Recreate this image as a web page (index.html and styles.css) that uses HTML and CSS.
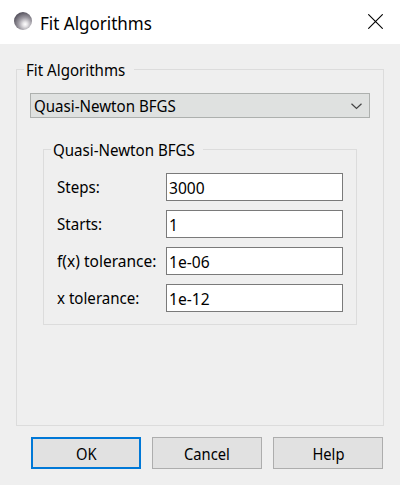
FILE: index.html
```
<!DOCTYPE html>
<html lang="en">
<head>
<meta charset="utf-8">
<title>Fit Algorithms</title>
<link rel="stylesheet" href="styles.css">
</head>
<body>
<header class="titlebar">
  <svg class="app-icon" width="18" height="18" viewBox="0 0 18 18">
    <defs><radialGradient id="ball" cx="0.62" cy="0.68" r="0.68">
      <stop offset="0" stop-color="#fff"/><stop offset="0.2" stop-color="#e4e2e5"/><stop offset="0.55" stop-color="#9d9aa2"/><stop offset="1" stop-color="#57545f"/>
    </radialGradient></defs>
    <circle cx="9" cy="9" r="9" fill="url(#ball)"/>
  </svg>
  <h1 class="title"><span class="text">Fit Algorithms</span></h1>
  <svg class="close" width="15" height="15" viewBox="0 0 15 15"><path d="M0.3 0.3L14.7 14.7M14.7 0.3L0.3 14.7" stroke="#000" stroke-width="1.1"/></svg>
</header>
<main class="dialog">
  <section class="group outer">
    <div class="caption"><span class="text">Fit Algorithms</span></div>
    <div class="select">
      <span class="text">Quasi-Newton BFGS</span>
      <svg width="11" height="7" viewBox="0 0 11 7"><path d="M0.5 0.7L5.5 5.5L10.5 0.7" fill="none" stroke="#444" stroke-width="1.2"/></svg>
    </div>
    <section class="group inner">
      <div class="caption"><span class="text">Quasi-Newton BFGS</span></div>
      <div class="form">
        <span class="text">Steps:</span><div class="input"><span class="text">3000</span></div>
        <span class="text">Starts:</span><div class="input"><span class="text">1</span></div>
        <span class="text wide">f(x) tolerance:</span><div class="input"><span class="text">1e-06</span></div>
        <span class="text">x tolerance:</span><div class="input"><span class="text">1e-12</span></div>
      </div>
    </section>
  </section>
  <footer class="buttons">
    <div class="button default"><span class="text">OK</span></div>
    <div class="button"><span class="text">Cancel</span></div>
    <div class="button"><span class="text">Help</span></div>
  </footer>
</main>
</body>
</html>
```
FILE: styles.css
```
* { box-sizing: border-box; }
body {
  margin: 0;
  width: 400px;
  height: 485px;
  overflow: hidden;
  background: #efefef;
  color: #000;
  font: 16px/22px "Noto Sans", "Open Sans", sans-serif;
  white-space: nowrap;
}
svg { display: block; flex: none; }
.text { display: inline-block; transform-origin: 0 50%; transform: scaleX(0.943); }
.titlebar {
  display: flex;
  align-items: center;
  height: 44px;
  padding: 0 17px 2px 14px;
  background: #fff;
}
.title {
  flex: 1;
  margin: 3px 0 0 8px;
  font-size: 18px;
  font-weight: 400;
}
.title .text { transform: scaleX(0.945); }
.dialog { padding: 25px 16px 0; }
.group { border: 1px solid #dcdcdc; }
.caption {
  width: max-content;
  height: 22px;
  margin-top: -11px;
  background: #efefef;
}
.outer { height: 357px; padding: 0 13px; }
.outer > .caption { width: 110px; margin-left: -6px; padding-left: 2px; }
.select {
  display: flex;
  align-items: center;
  justify-content: space-between;
  height: 25px;
  margin-top: 12px;
  padding: 1px 7px 0 3px;
  border: 1px solid #adb0ae;
  background: #dfe1e0;
}
.inner {
  width: 314px;
  height: 176px;
  margin: 31px 0 0 13px;
  padding: 0 13px;
}
.inner > .caption { width: 152px; margin-left: -6px; padding-left: 2px; }
.form {
  display: grid;
  grid-template-columns: 109px 177px;
  grid-auto-rows: 28px;
  row-gap: 9px;
  align-items: center;
  margin-top: 12px;
}
.form .wide { transform: scaleX(0.97); }
.input {
  height: 28px;
  padding: 3px 2px 0;
  border: 1px solid #7a7a7a;
  background: #fff;
}
.input .text { transform: scaleX(0.975); }
.buttons {
  display: flex;
  gap: 11px;
  margin: 11px 0 0 15px;
}
.button {
  display: flex;
  align-items: center;
  justify-content: center;
  width: 110px;
  height: 32px;
  padding-top: 2px;
  border: 1px solid #adadad;
  background: #e1e1e1;
}
.button .text { transform-origin: 50% 50%; transform: scaleX(0.92); }
.default { border: 2px solid #0078d7; }
.default { padding-top: 1px; }
```
